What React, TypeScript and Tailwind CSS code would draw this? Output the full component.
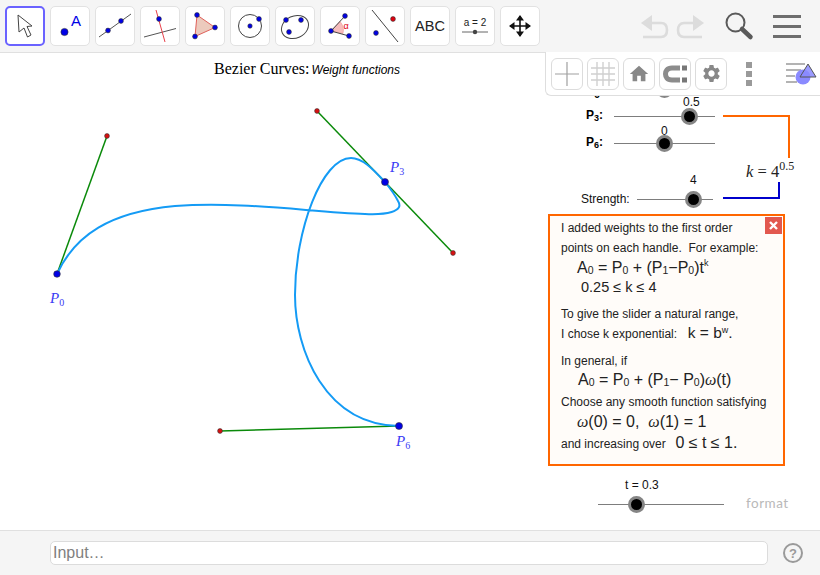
import type { ReactNode } from "react";
import { MdHome, MdSettings } from "react-icons/md";

const sans = "font-['Liberation_Sans',sans-serif]";
const serif = "font-['Liberation_Serif',serif]";

const BLUE = "#0000e6";
const RED = "#e0000f";

const Dot = ({ x, y, r = 3, fill = BLUE }: { x: number; y: number; r?: number; fill?: string }) => (
  <circle cx={x} cy={y} r={r} fill={fill} stroke="#333" strokeWidth={0.6} />
);

const Tool = ({ children }: { children: ReactNode }) => (
  <div className="w-[40px] h-[40px] rounded-[5px] border border-[#e2e2e2] bg-white shrink-0 flex items-center justify-center">
    {children}
  </div>
);

const Ico = ({ children }: { children: ReactNode }) => (
  <svg width="40" height="40" viewBox="0 0 40 40" className="shrink-0">
    {children}
  </svg>
);

const StyleBtn = ({ children }: { children: ReactNode }) => (
  <div className="w-[32px] h-[32px] rounded-[6px] border border-[#dcdcdc] bg-white flex items-center justify-center shrink-0">
    {children}
  </div>
);

const Slider = ({
  className,
  width,
  knob,
  label,
  labelClass,
}: {
  className: string;
  width: number;
  knob: number;
  label?: string;
  labelClass?: string;
}) => (
  <div className={`absolute h-[1px] bg-[#7d7d7d] ${className}`} style={{ width }}>
    <div
      className="absolute top-[-8px] w-[17px] h-[17px] rounded-full bg-black border-[3px] border-[#858585]"
      style={{ left: knob - 8.5 }}
    />
    {label && (
      <span className={`absolute text-[12px] leading-none text-[#111] ${sans} ${labelClass ?? ""}`} style={{ left: knob }}>
        {label}
      </span>
    )}
  </div>
);

const Line = ({ className, children }: { className: string; children: ReactNode }) => (
  <div className={`flex items-center whitespace-pre ${className}`}>{children}</div>
);

const sub = "text-[10.5px] relative top-[3px]";

export default function App() {
  return (
    <div className={`w-[820px] h-[575px] flex flex-col bg-white overflow-hidden ${sans}`}>
      {/* toolbar */}
      <div className="h-[53px] shrink-0 bg-[#f5f5f5] border-b border-[#e0e0e0] flex items-start pt-[6px] pl-[5px]">
        <div className="flex gap-[5px]">
          <div className="w-[40px] h-[40px] rounded-[5px] border-2 border-[#6a62ff] bg-white shrink-0 flex items-center justify-center">
            <svg width="36" height="36" viewBox="2 2 36 36">
              <path d="M13 9 L14 26 L19 22 L22.5 31 L26 29 L22 20.5 L27 20 Z" fill="#fff" stroke="#444" strokeWidth="1" />
            </svg>
          </div>
          <Tool>
            <Ico>
              <Dot x={14.5} y={26} r={3.6} />
              <text x={26} y={19.5} textAnchor="middle" fontSize="15" fill={BLUE} fontFamily="Liberation Sans">A</text>
            </Ico>
          </Tool>
          <Tool>
            <Ico>
              <line x1="4" y1="31" x2="36" y2="8" stroke="#555" strokeWidth="1" />
              <Dot x={13} y={24.5} r={2.4} />
              <Dot x={26} y={15} r={2.4} />
            </Ico>
          </Tool>
          <Tool>
            <Ico>
              <line x1="4" y1="31" x2="36" y2="22.5" stroke="#555" strokeWidth="1" />
              <line x1="16" y1="4" x2="25" y2="36" stroke="#e8404a" strokeWidth="1" />
              <Dot x={19} y={13} r={2.4} />
            </Ico>
          </Tool>
          <Tool>
            <Ico>
              <polygon points="12,9 30,21.5 10,30.5" fill="#eccabd" stroke="#e0605a" strokeWidth="1" />
              <Dot x={12} y={9} r={2.4} />
              <Dot x={30} y={21.5} r={2.4} />
              <Dot x={10} y={30.5} r={2.4} />
            </Ico>
          </Tool>
          <Tool>
            <Ico>
              <circle cx="20" cy="20" r="11.5" fill="none" stroke="#444" strokeWidth="1" />
              <Dot x={20} y={20} r={2.2} />
              <Dot x={29} y={13} r={2.4} />
            </Ico>
          </Tool>
          <Tool>
            <Ico>
              <ellipse cx="20" cy="21" rx="14" ry="11" transform="rotate(-25 20 21)" fill="none" stroke="#444" strokeWidth="1" />
              <Dot x={11} y={14} r={2.4} />
              <Dot x={26} y={14} r={2.4} />
              <Dot x={14} y={26} r={2.4} />
            </Ico>
          </Tool>
          <Tool>
            <Ico>
              <path d="M11 25 L20 15.5 A13 13 0 0 1 23 27.5 Z" fill="#f6bcbc" stroke="#e88" strokeWidth="0.5" />
              <line x1="11" y1="25" x2="25" y2="10" stroke="#444" strokeWidth="1" />
              <line x1="11" y1="25" x2="29" y2="30" stroke="#444" strokeWidth="1" />
              <Dot x={11} y={25} r={2.4} />
              <Dot x={25} y={10} r={2.4} />
              <Dot x={29} y={30} r={2.4} />
              <text x={26} y={23} textAnchor="middle" fontSize="9" fill={RED} fontFamily="Liberation Sans">α</text>
            </Ico>
          </Tool>
          <Tool>
            <Ico>
              <line x1="7" y1="4" x2="33" y2="36" stroke="#444" strokeWidth="1" />
              <Dot x={11} y={27} r={2.4} />
              <Dot x={28} y={13} r={2.4} fill={RED} />
            </Ico>
          </Tool>
          <Tool>
            <span className="text-[14.5px] leading-none text-[#222]">ABC</span>
          </Tool>
          <Tool>
            <Ico>
              <text x={20} y={19.5} textAnchor="middle" fontSize="10" fill="#222" fontFamily="Liberation Sans">a = 2</text>
              <line x1="7" y1="26" x2="33" y2="26" stroke="#666" strokeWidth="1" />
              <circle cx="20" cy="26" r="2.2" fill="#444" />
            </Ico>
          </Tool>
          <Tool>
            <Ico>
              <path d="M20 10 V30 M10 20 H30" stroke="#111" strokeWidth="1.6" />
              <path d="M20 9 L16 14.5 H24 Z M20 31 L16 25.5 H24 Z M9 20 L14.5 16 V24 Z M31 20 L25.5 16 V24 Z" fill="#111" />
            </Ico>
          </Tool>
        </div>
        <div className="ml-auto flex items-center h-[40px] pr-[19px]">
          <svg width="29" height="25" viewBox="0 0 29 25" className="mt-[1px]">
            <path d="M1 9 L12 1 V17 Z" fill="#dcdcdc" />
            <path d="M12 9 H21 C25 9 27 12 27 16 C27 20 25 23 21 23 H3" fill="none" stroke="#dcdcdc" strokeWidth="2.6" />
          </svg>
          <svg width="29" height="25" viewBox="0 0 29 25" className="ml-[7px] mt-[1px]">
            <path d="M28 9 L17 1 V17 Z" fill="#dcdcdc" />
            <path d="M17 9 H8 C4 9 2 12 2 16 C2 20 4 23 8 23 H26" fill="none" stroke="#dcdcdc" strokeWidth="2.6" />
          </svg>
          <svg width="30" height="30" viewBox="0 0 30 30" className="ml-[19px]">
            <circle cx="11.5" cy="11.5" r="9" fill="none" stroke="#5a5a5a" strokeWidth="2" />
            <line x1="18" y1="18" x2="26.5" y2="26" stroke="#5a5a5a" strokeWidth="4.5" strokeLinecap="round" />
          </svg>
          <div className="ml-[19px] w-[28px] flex flex-col gap-[7px]">
            <div className="h-[3px] bg-[#6e6e6e]" />
            <div className="h-[3px] bg-[#6e6e6e]" />
            <div className="h-[3px] bg-[#6e6e6e]" />
          </div>
        </div>
      </div>

      {/* graphics view */}
      <div className="relative flex-1">
        <svg className="absolute inset-0" width="820" height="477" viewBox="0 53 820 477">
          <g stroke="#0a8a0a" strokeWidth="1.5">
            <line x1="57" y1="274" x2="107" y2="136" />
            <line x1="317" y1="111" x2="453" y2="253" />
            <line x1="220" y1="431" x2="399" y2="426" />
          </g>
          <path
            d="M57 274 C75 235 110 212 175 206 C240 201 310 212 365 214 C385 215 405 212 398 201 C395 195 389 187 385 182 C372 168 362 158 351 158 C322 158 295 230 295 295 C295 350 325 425 399 426"
            fill="none"
            stroke="#149bf5"
            strokeWidth="2"
          />
          <Dot x={107} y={136} r={2.4} fill="#d81010" />
          <Dot x={317} y={111} r={2.4} fill="#d81010" />
          <Dot x={453} y={253} r={2.4} fill="#d81010" />
          <Dot x={220} y={431} r={2.4} fill="#d81010" />
          <Dot x={57} y={274} r={3.3} />
          <Dot x={385} y={182} r={3.5} />
          <Dot x={399} y={426} r={3.5} />
          <path d="M723 116 H789 V158" fill="none" stroke="#ff6600" strokeWidth="2" />
          <path d="M723 198 H779 V182" fill="none" stroke="#0000cc" strokeWidth="2" />
        </svg>

        <div className="absolute left-[214px] top-[6px] flex items-baseline whitespace-nowrap text-black leading-5">
          <span className={`${serif} text-[16px]`}>Bezier Curves:</span>
          <span className={`${sans} italic text-[12px] ml-[2px]`}>Weight functions</span>
        </div>

        <span className={`absolute left-[50px] top-[235px] ${serif} italic text-[15px] leading-5 text-[#3a3af5]`}>
          P<sub className="not-italic text-[10px]">0</sub>
        </span>
        <span className={`absolute left-[390px] top-[104px] ${serif} italic text-[15px] leading-5 text-[#3a3af5]`}>
          P<sub className="not-italic text-[10px]">3</sub>
        </span>
        <span className={`absolute left-[396px] top-[378px] ${serif} italic text-[15px] leading-5 text-[#3a3af5]`}>
          P<sub className="not-italic text-[10px]">6</sub>
        </span>

        {/* sliders */}
        <Slider className="left-[614px] top-[36px]" width={101} knob={50} />
        <span className="absolute left-[594px] top-[36px] text-[11px] font-bold leading-none text-black">0</span>
        <span className="absolute left-[586px] top-[54px] text-[12px] font-bold leading-4 text-black">
          P<sub className="text-[9px]">3</sub>:
        </span>
        <Slider className="left-[614px] top-[63px]" width={101} knob={75} label="0.5" labelClass="top-[-20px] -translate-x-[6px]" />
        <span className="absolute left-[586px] top-[81px] text-[12px] font-bold leading-4 text-black">
          P<sub className="text-[9px]">6</sub>:
        </span>
        <Slider className="left-[614px] top-[90px]" width={101} knob={50} label="0" labelClass="top-[-18px] -translate-x-[3px]" />
        <span className={`absolute left-[746px] top-[109px] ${serif} italic text-[16.5px] leading-5 text-[#222] whitespace-nowrap`}>
          k <span className="not-italic">= 4</span>
          <sup className="not-italic text-[12px] -top-[7px]">0.5</sup>
        </span>
        <span className="absolute left-[581px] top-[138px] text-[12px] leading-4 text-[#111]">Strength:</span>
        <Slider className="left-[637px] top-[146px]" width={76} knob={56} label="4" labelClass="top-[-25px] -translate-x-[3px]" />

        {/* note box */}
        <div className="absolute left-[548px] top-[161px] w-[237px] h-[252px] border-2 border-[#ff6600] bg-[#fffcf9] pl-[11px] text-[12px] text-[#222] flex flex-col">
          <div className="absolute right-[1px] top-[1px] w-[17px] h-[17px] bg-[#e2584f] flex items-center justify-center">
            <svg width="11" height="11" viewBox="0 0 11 11">
              <path d="M2 2 L9 9 M9 2 L2 9" stroke="#fff" strokeWidth="2.4" />
            </svg>
          </div>
          <Line className="h-[20px] mt-[2px]">I added weights to the first order</Line>
          <Line className="h-[20px]">points on each handle.  For example:</Line>
          <Line className="h-[19px] pl-[16px] text-[16px]">
            A<span className={sub}>0</span> = P<span className={sub}>0</span> + (P<span className={sub}>1</span>−P<span className={sub}>0</span>)t<sup className="text-[9px]">k</sup>
          </Line>
          <Line className="h-[21px] pl-[20px] text-[14.5px]">0.25 ≤ k ≤ 4</Line>
          <Line className="h-[20px] mt-[6px]">To give the slider a natural range,</Line>
          <Line className="h-[19px]">
            I chose k exponential:  <span className="text-[15.5px] ml-[4px] relative -top-[1px]">k = b<sup className="text-[9px]">w</sup>.</span>
          </Line>
          <Line className="h-[18px] mt-[9px]">In general, if</Line>
          <Line className="h-[19px] pl-[17px] text-[16px]">
            A<span className={sub}>0</span> = P<span className={sub}>0</span> + (P<span className={sub}>1</span>− P<span className={sub}>0</span>)<span className={`${serif} italic`}>ω</span>(t)
          </Line>
          <Line className="h-[20px] mt-[3px]">Choose any smooth function satisfying</Line>
          <Line className="h-[19px] pl-[16px] text-[16px]">
            <span className={`${serif} italic`}>ω</span>(0) = 0,  <span className={`${serif} italic`}>ω</span>(1) = 1
          </Line>
          <Line className="h-[20px] mt-[3px]">
            and increasing over  <span className="text-[16px] ml-[3px] relative -top-[1px]">0 ≤ t ≤ 1.</span>
          </Line>
        </div>

        <Slider className="left-[598px] top-[451px]" width={126} knob={38} label="t = 0.3" labelClass="top-[-25px] -translate-x-[11px]" />
        <span className="absolute left-[746px] top-[440px] font-['Lato',sans-serif] text-[13.5px] leading-5 tracking-[0.5px] text-[#b9b9b9]">
          format
        </span>

        {/* style bar */}
        <div className="absolute right-0 top-[-1px] w-[275px] h-[44px] bg-white border-b border-l border-[#dedede] rounded-bl-[6px] flex items-center pl-[5px] gap-[4px]">
          <StyleBtn>
            <svg width="26" height="26" viewBox="0 0 26 26">
              <path d="M13 1 V25 M1 13 H25" stroke="#a0a0a0" strokeWidth="1.2" />
            </svg>
          </StyleBtn>
          <StyleBtn>
            <svg width="26" height="26" viewBox="0 0 26 26">
              <path d="M7 1 V25 M13 1 V25 M19 1 V25 M1 7 H25 M1 13 H25 M1 19 H25" stroke="#d0d0d0" strokeWidth="1.4" />
            </svg>
          </StyleBtn>
          <StyleBtn>
            <MdHome size={22} color="#888" />
          </StyleBtn>
          <StyleBtn>
            <svg width="26" height="20" viewBox="0 0 26 20">
              <path d="M18 4 H10 C5 4 3.5 7 3.5 10 C3.5 13 5 16 10 16 H18" fill="none" stroke="#8c8c8c" strokeWidth="5" />
              <path d="M20 1.5 H25 V6.5 H20 Z M20 13.5 H25 V18.5 H20 Z" fill="#777" />
            </svg>
          </StyleBtn>
          <StyleBtn>
            <MdSettings size={21} color="#888" />
          </StyleBtn>
          <div className="ml-[15px] flex flex-col gap-[3px] w-[6px]">
            <div className="h-[6px] bg-[#9a9a9a]" />
            <div className="h-[6px] bg-[#9a9a9a]" />
            <div className="h-[6px] bg-[#9a9a9a]" />
          </div>
          <svg width="32" height="24" viewBox="0 0 32 24" className="ml-[29px]">
            <path d="M1 2 H20 M1 8 H16 M1 14 H10 M1 20 H12" stroke="#9a9a9a" strokeWidth="1.6" />
            <circle cx="18" cy="15" r="7.5" fill="#8a8aff" />
            <path d="M23 2 L31 15 H15 Z" fill="#8a8aff" fillOpacity="0.85" stroke="#555" strokeWidth="1" />
          </svg>
        </div>
      </div>

      {/* input bar */}
      <div className="h-[45px] shrink-0 bg-[#f5f5f5] border-t border-[#e0e0e0] flex items-center pl-[50px]">
        <div className="w-[718px] h-[24px] bg-white border border-[#dcdcdc] rounded-[5px] flex items-center pl-[2px] pb-[1px] text-[16px] text-[#808080]">
          Input…
        </div>
        <div className="ml-[15px] w-[20px] h-[20px] rounded-full border-2 border-[#9a9a9a] flex items-center justify-center text-[13px] font-bold leading-none text-[#9a9a9a]">
          ?
        </div>
      </div>
    </div>
  );
}
